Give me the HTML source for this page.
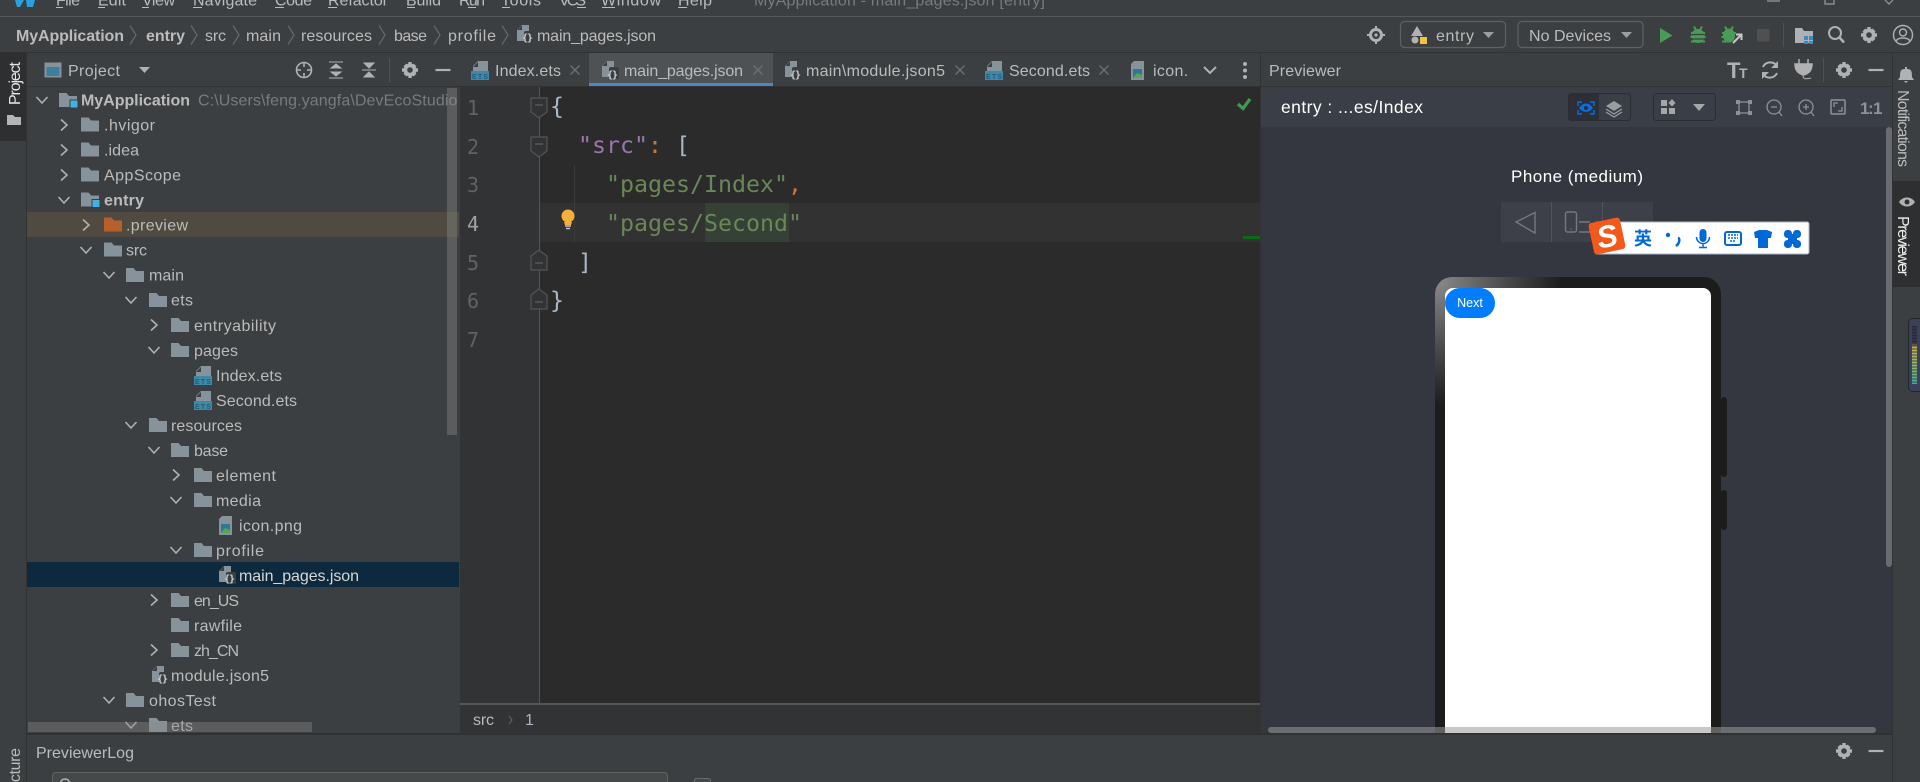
<!DOCTYPE html>
<html lang="en"><head><meta charset="utf-8"><title>DevEco Studio</title>
<style>
html,body{margin:0;padding:0;background:#3c3f41;width:1920px;height:782px;overflow:hidden}
svg{display:block}
text{font-family:"Liberation Sans",sans-serif;font-size:16px;fill:#bbbbbb;white-space:pre}
.b{font-weight:bold}
.m text,text.m{font-family:"DejaVu Sans Mono",monospace;font-size:23.25px}
.n{font-family:"DejaVu Sans Mono",monospace;font-size:20px;fill:#606366}
.w{font-family:"Liberation Sans",sans-serif;fill:#fff;font-size:17.5px}
.e{font-size:7px;font-weight:bold;fill:#1f5f7c}
.j{font-family:"DejaVu Sans Mono",monospace;font-size:10px;font-weight:bold;fill:#d0d4d6}
.ic{fill:none;stroke:#afb1b3;stroke-width:1.6}
</style></head><body>
<svg xmlns="http://www.w3.org/2000/svg" width="1920" height="782" viewBox="0 0 1920 782">
<defs>
<g id="f"><path d="M0 0H7.5L10 3H18V14H0Z" fill="#87939a"/></g>
<g id="fo"><path d="M0 0H7.5L10 3H18V14H0Z" fill="#b85f2e"/></g>
<g id="fm"><path d="M0 0H7.5L10 3H18V14H0Z" fill="#87939a"/><rect x="11" y="7" width="8" height="8" fill="#3fb1e3" stroke="#3c3f41" stroke-width="1"/></g>
<path id="r" d="M-3-5.500 3 0-3 5.500" fill="none" stroke="#afb1b3" stroke-width="1.600"/>
<path id="d" d="M-5.500-3 0 3 5.500-3" fill="none" stroke="#afb1b3" stroke-width="1.600"/>
<g id="ets"><path d="M7 0H17V10H2V5Z" fill="#87939a"/><path d="M7 1V6H2Z" fill="#3c3f41"/><rect x="0" y="10" width="18" height="9" fill="#3f88a8"/></g>
<g id="js"><path d="M5 0H12V7H14V16H0V5Z" fill="#87939a"/><path d="M5 .5V5H.5Z" fill="#3c3f41"/><rect x="7" y="6" width="10" height="12" rx="2" fill="#3c3f41"/></g>
<g id="im"><path d="M3 0H13V19H0V3Z" fill="#87939a"/><rect x="2" y="8" width="9" height="9" fill="#2e7a93"/><path d="M2 17 6 12 11 14V17Z" fill="#5aa455"/></g>
<g id="gear"><circle r="4.600" fill="none" stroke="#afb1b3" stroke-width="3.600"/><path d="M-1.700-8H1.700V-5H-1.700ZM-1.700 5H1.700V8H-1.700ZM5 -1.700H8V1.700H5ZM-8-1.700H-5V1.700H-8ZM3.600-6.500 6.500-3.600 4.500-1.600 1.600-4.500ZM-6.500 3.600-3.600 6.500-1.600 4.500-4.500 1.600ZM-6.500-3.600-3.600-6.500-1.600-4.500-4.500-1.600ZM3.600 6.500 6.500 3.600 4.500 1.600 1.600 4.500Z" fill="#afb1b3"/></g>
<path id="mn" d="M-7.500 0H7.500" stroke="#afb1b3" stroke-width="2.200"/>
<path id="x" d="M-4.500-4.500 4.500 4.500M4.500-4.500-4.500 4.500" stroke="#6e7072" stroke-width="1.300"/>
<path id="cv" d="M-3-9.500 3 0-3 9.500" fill="none" stroke="#67696b" stroke-width="1.200"/>
<g id="fold"><path d="M0 0H16V14L8 20 0 14Z" fill="#313335" stroke="#555" stroke-width="1.200"/><path d="M4 7H12" stroke="#606366" stroke-width="1.200"/></g>
<g id="fold2"><path d="M0 20H16V6L8 0 0 6Z" fill="#313335" stroke="#555" stroke-width="1.200"/><path d="M4 13H12" stroke="#606366" stroke-width="1.200"/></g>
<radialGradient id="ph" gradientUnits="userSpaceOnUse" cx="1437" cy="280" r="125"><stop offset="0" stop-color="#8a8a8a"/><stop offset=".55" stop-color="#4a4a4a"/><stop offset="1" stop-color="#1c1c1c"/></radialGradient>
<linearGradient id="mt" x1="0" y1="0" x2="0" y2="1"><stop offset="0" stop-color="#272936"/><stop offset=".3" stop-color="#272936"/><stop offset=".36" stop-color="#c7b13f"/><stop offset=".65" stop-color="#9aba5a"/><stop offset="1" stop-color="#37b495"/></linearGradient>
<clipPath id="trc"><rect x="27" y="87" width="430" height="646"/></clipPath>
<clipPath id="tc"><rect x="0" y="0" width="1920" height="16"/></clipPath>
<clipPath id="pc"><rect x="1262" y="127" width="630" height="606"/></clipPath>
<clipPath id="ic"><rect x="1140" y="53" width="49" height="33"/></clipPath>
</defs>

<rect width="1920" height="782" fill="#3c3f41"/>

<!-- menu bar -->
<g clip-path="url(#tc)">
<path d="M15 0H24L20 7H17ZM26 0H35L33 7H27Z" fill="#2b9fe0"/>
<text x="56" y="5.500" textLength="24">File</text><text x="98" y="5.500" textLength="28">Edit</text><text x="142" y="5.500" textLength="33">View</text><text x="193" y="5.500" textLength="64">Navigate</text><text x="275" y="5.500" textLength="37">Code</text><text x="328" y="5.500" textLength="60">Refactor</text><text x="406" y="5.500" textLength="35">Build</text><text x="459" y="5.500" textLength="26">Run</text><text x="501" y="5.500" textLength="40">Tools</text><text x="559" y="5.500" textLength="27">VCS</text><text x="601" y="5.500" textLength="60">Window</text><text x="678" y="5.500" textLength="34">Help</text>
<path d="M56 7.500H63M98 7.500H105M142 7.500H149M193 7.500H202M275 7.500H284M328 7.500H337M407 7.500H415M468 7.500H476M502 7.500H510M577 7.500H586M602 7.500H615M678 7.500H687" stroke="#bbbbbb" stroke-width="1"/>
<text x="754" y="5.500" textLength="291" style="fill:#7a7a7a">MyApplication - main_pages.json [entry]</text>
<path d="M1767 1H1780M1825 0V4H1834V0M1885 0 1889 4 1893 0" fill="none" stroke="#9a9a9a" stroke-width="1.200"/>
</g>
<rect y="16" width="1920" height="1" fill="#555759"/>

<!-- breadcrumbs -->
<text class="b" x="16" y="41" textLength="108">MyApplication</text><use href="#cv" x="133" y="35"/>
<text class="b" x="146" y="41" textLength="39">entry</text><use href="#cv" x="194" y="35"/>
<text x="205" y="41" textLength="21">src</text><use href="#cv" x="236" y="35"/>
<text x="246" y="41" textLength="35">main</text><use href="#cv" x="291" y="35"/>
<text x="301" y="41" textLength="71">resources</text><use href="#cv" x="382" y="35"/>
<text x="394" y="41" textLength="33">base</text><use href="#cv" x="437" y="35"/>
<text x="448" y="41" textLength="48">profile</text><use href="#cv" x="505" y="35"/>
<use href="#js" x="517" y="25"/><text class="j" x="522" y="41" textLength="11">{}</text>
<text x="537" y="41" textLength="119">main_pages.json</text>

<!-- top-right toolbar -->
<circle cx="1376" cy="35" r="5.500" fill="none" stroke="#afb1b3" stroke-width="3"/><circle cx="1376" cy="35" r="1.600" fill="#afb1b3"/><path d="M1376 26V29M1376 41V44M1367 35H1370M1382 35H1385" stroke="#afb1b3" stroke-width="2"/>
<rect x="1400.500" y="21.500" width="105" height="26" rx="4" fill="none" stroke="#5e6163" stroke-width="1.200"/>
<path d="M1417 26 1423 36H1411Z" fill="#afb1b3"/><circle cx="1415" cy="40" r="3.500" fill="#afb1b3"/><rect x="1420" y="37" width="7" height="7" fill="#f3c33d"/>
<text x="1436" y="41" textLength="38">entry</text><path d="M1483 32H1494L1488.500 38Z" fill="#9b9ea0"/>
<rect x="1518" y="21.500" width="125" height="26" rx="4" fill="none" stroke="#5e6163" stroke-width="1.200"/>
<text x="1529" y="41" textLength="82">No Devices</text><path d="M1621 32H1632L1626.500 38Z" fill="#9b9ea0"/>
<path d="M1660 28 1672.500 35.500 1660 43Z" fill="#499c54"/>
<g fill="#499c54"><ellipse cx="1698" cy="36" rx="6.500" ry="7"/><path d="M1691 32H1705V34H1691ZM1690.500 36H1705.500V38H1690.500ZM1691 40.500H1705V42.500H1691Z"/></g><path d="M1694 26.500 1696 30M1702 26.500 1700 30" stroke="#499c54" stroke-width="2"/><path d="M1692 34.500H1704M1692 39H1704" stroke="#3c3f41" stroke-width="1.200"/>
<g fill="#499c54"><ellipse cx="1729" cy="35.500" rx="6" ry="7"/><path d="M1722 32H1736V34H1722ZM1721.500 36H1733V38H1721.500ZM1722 40.500H1731V42.500H1722Z"/></g><path d="M1725 26.500 1727 30M1733 26.500 1731 30" stroke="#499c54" stroke-width="2"/><path d="M1733 43 1741 35M1736 34.500H1741.500V40" fill="none" stroke="#c6c8ca" stroke-width="2"/>
<rect x="1757" y="29" width="12.500" height="12.500" fill="#505050"/>
<rect x="1783" y="23" width="1" height="24" fill="#4f5254"/>
<path d="M1795 28H1802L1804 31H1813V43H1795Z" fill="#afb1b3"/><path d="M1804 36H1808V40H1804ZM1809 36H1813V40H1809ZM1804 41H1808V44H1804ZM1809 41H1813V44H1809Z" fill="#2f8fd0"/>
<circle cx="1835" cy="33" r="6" fill="none" stroke="#afb1b3" stroke-width="2"/><path d="M1839.500 37.500 1844 42.500" stroke="#afb1b3" stroke-width="2.500"/>
<use href="#gear" x="1869" y="35"/>
<circle cx="1903" cy="35" r="9.500" fill="none" stroke="#afb1b3" stroke-width="1.400"/><circle cx="1903" cy="32.500" r="3.500" fill="none" stroke="#afb1b3" stroke-width="1.400"/><path d="M1896 41C1898 37 1908 37 1910 41" fill="none" stroke="#afb1b3" stroke-width="1.400"/>
<rect y="52" width="1920" height="1" fill="#2f3133"/>

<!-- left strip -->
<rect x="0" y="53" width="26" height="88" fill="#2d2f30"/>
<rect x="26" y="53" width="1" height="729" fill="#323232"/>
<text transform="translate(20,105) rotate(-90)" textLength="43" style="fill:#e6e6e6">Project</text>
<path d="M7 115H13L15 117H21V125H7Z" fill="#b5b5b5"/>
<text transform="translate(20,810) rotate(-90)" textLength="62">Structure</text>

<!-- project pane header -->
<rect x="44.500" y="62.500" width="17" height="15" fill="#87939a"/><rect x="46.500" y="67" width="13" height="9" fill="#3d7f9d"/>
<text x="68" y="76" textLength="52">Project</text>
<path d="M139 67H150L144.500 73Z" fill="#afb1b3"/>
<circle cx="304" cy="70" r="7.500" class="ic"/><path d="M304 62V67M304 73V78M296 70H301M307 70H312" stroke="#afb1b3" stroke-width="1.600"/>
<path d="M329 62H343M329 78H343M331 68 336 64 341 68ZM331 72 336 76 341 72Z" fill="#afb1b3" stroke="#afb1b3" stroke-width="1"/>
<path d="M362 70H376M364 63 369 68 374 63ZM364 77 369 72 374 77Z" fill="#afb1b3" stroke="#afb1b3" stroke-width="1"/>
<rect x="389" y="58" width="1" height="24" fill="#4f5254"/>
<use href="#gear" x="410" y="70"/><use href="#mn" x="443" y="70"/>
<rect x="27" y="86" width="433" height="1" fill="#323232"/>

<!-- tree -->
<rect x="27" y="212" width="432" height="25" fill="#4f4b41"/>
<rect x="27" y="562" width="432" height="25" fill="#0d293e"/>
<g clip-path="url(#trc)">
<use href="#d" x="42" y="100"/><use href="#fm" x="59" y="93"/><text class="b" x="81" y="105.500" textLength="109">MyApplication</text>
<text x="198" y="105.500" textLength="318" style="fill:#787b7d">C:\Users\feng.yangfa\DevEcoStudioProjects</text>
<use href="#r" x="64" y="125"/><use href="#f" x="81" y="117.500"/><text x="104" y="130.500" textLength="51">.hvigor</text>
<use href="#r" x="64" y="150"/><use href="#f" x="81" y="142.500"/><text x="104" y="155.500" textLength="35">.idea</text>
<use href="#r" x="64" y="175"/><use href="#f" x="81" y="167.500"/><text x="104" y="180.500" textLength="77">AppScope</text>
<use href="#d" x="64" y="200"/><use href="#fm" x="81" y="192.500"/><text class="b" x="104" y="205.500" textLength="40">entry</text>
<use href="#r" x="86" y="225"/><use href="#fo" x="104" y="217.500"/><text x="126" y="230.500" textLength="62">.preview</text>
<use href="#d" x="86" y="250"/><use href="#f" x="104" y="242.500"/><text x="126" y="255.700" textLength="21">src</text>
<use href="#d" x="109" y="275"/><use href="#f" x="126" y="268"/><text x="149" y="280.700" textLength="35">main</text>
<use href="#d" x="131" y="300"/><use href="#f" x="149" y="293"/><text x="171" y="305.700" textLength="22">ets</text>
<use href="#r" x="154" y="325"/><use href="#f" x="171" y="318"/><text x="194" y="330.800" textLength="82">entryability</text>
<use href="#d" x="154" y="350"/><use href="#f" x="171" y="343"/><text x="194" y="355.800" textLength="44">pages</text>
<use href="#ets" x="194" y="366"/><text class="e" x="195" y="384" textLength="16">ETS</text><text x="216" y="380.800" textLength="66">Index.ets</text>
<use href="#ets" x="194" y="391"/><text class="e" x="195" y="409" textLength="16">ETS</text><text x="216" y="405.800" textLength="81">Second.ets</text>
<use href="#d" x="131" y="425"/><use href="#f" x="149" y="418"/><text x="171" y="430.900" textLength="71">resources</text>
<use href="#d" x="154" y="450"/><use href="#f" x="171" y="443"/><text x="194" y="455.900" textLength="34">base</text>
<use href="#r" x="176" y="475"/><use href="#f" x="194" y="468"/><text x="216" y="480.900" textLength="60">element</text>
<use href="#d" x="176" y="500"/><use href="#f" x="194" y="493"/><text x="216" y="506" textLength="45">media</text>
<use href="#im" x="219" y="516"/><text x="239" y="531" textLength="63">icon.png</text>
<use href="#d" x="176" y="550"/><use href="#f" x="194" y="543"/><text x="216" y="556" textLength="48">profile</text>
<use href="#js" x="219" y="566"/><text class="j" x="224" y="582" textLength="11">{}</text><text x="239" y="581" textLength="120" style="fill:#d6d6d6">main_pages.json</text>
<use href="#r" x="154" y="600"/><use href="#f" x="171" y="593"/><text x="194" y="606" textLength="45">en_US</text>
<use href="#f" x="171" y="618"/><text x="194" y="631" textLength="48">rawfile</text>
<use href="#r" x="154" y="650"/><use href="#f" x="171" y="643"/><text x="194" y="656" textLength="45">zh_CN</text>
<use href="#js" x="152" y="666"/><text class="j" x="157" y="682" textLength="11">{}</text><text x="171" y="681" textLength="98">module.json5</text>
<use href="#d" x="109" y="700"/><use href="#f" x="126" y="693"/><text x="149" y="706" textLength="67">ohosTest</text>
<use href="#d" x="131" y="725"/><use href="#f" x="149" y="718"/><text x="171" y="731" textLength="22">ets</text>
</g>
<rect x="447" y="88" width="10" height="347" fill="#8a8a8a" opacity=".4"/>
<rect x="28" y="722" width="284" height="10" fill="#8a8a8a" opacity=".4"/>

<!-- tab bar -->
<rect x="589" y="53" width="184" height="30" fill="#4e5254"/>
<rect x="589" y="83" width="184" height="4" fill="#4a88c7"/>
<use href="#ets" x="471" y="61"/><text class="e" x="472" y="79" textLength="16">ETS</text>
<text x="495" y="76" textLength="66">Index.ets</text><use href="#x" x="575" y="70"/>
<use href="#js" x="602" y="61"/><text class="j" x="607" y="78" textLength="11">{}</text>
<text x="624" y="76" textLength="119">main_pages.json</text><use href="#x" x="758" y="70"/>
<use href="#js" x="785" y="61"/><text class="j" x="790" y="78" textLength="11">{}</text>
<text x="806" y="76" textLength="139">main\module.json5</text><use href="#x" x="960" y="70"/>
<use href="#ets" x="985" y="61"/><text class="e" x="986" y="79" textLength="16">ETS</text>
<text x="1009" y="76" textLength="81">Second.ets</text><use href="#x" x="1104" y="70"/>
<use href="#im" x="1131" y="61"/>
<g clip-path="url(#ic)"><text x="1153" y="76" textLength="63">icon.png</text></g>
<path d="M1204 67 1210 73 1216 67" fill="none" stroke="#afb1b3" stroke-width="2"/>
<circle cx="1245" cy="64" r="2" fill="#afb1b3"/><circle cx="1245" cy="70.500" r="2" fill="#afb1b3"/><circle cx="1245" cy="77" r="2" fill="#afb1b3"/>
<rect x="460" y="86" width="800" height="1" fill="#323232"/>

<!-- editor -->
<rect x="460" y="87" width="800" height="616" fill="#2b2b2b"/>
<rect x="460" y="87" width="80" height="616" fill="#313335"/>
<rect x="540" y="203" width="720" height="39" fill="#323232"/>
<rect x="705" y="203" width="84" height="39" fill="#344134"/>
<rect x="539" y="87" width="1" height="616" fill="#555555"/>
<rect x="574" y="165" width="1" height="77" fill="#3b3b3b"/>
<use href="#fold" x="531" y="98"/><use href="#fold" x="531" y="137"/><use href="#fold2" x="531" y="250"/><use href="#fold2" x="531" y="289"/>
<text class="n" x="467" y="115">1</text><text class="n" x="467" y="154">2</text><text class="n" x="467" y="192">3</text><text class="n" x="467" y="231" style="fill:#a4a3a3">4</text><text class="n" x="467" y="270">5</text><text class="n" x="467" y="308">6</text><text class="n" x="467" y="347">7</text>
<g class="m">
<text x="550" y="114" style="fill:#a9b7c6">{</text>
<text x="578" y="153" style="fill:#9876aa">"src"<tspan style="fill:#cc7832">:</tspan><tspan style="fill:#a9b7c6"> [</tspan></text>
<text x="606" y="192" style="fill:#6a8759">"pages/Index"<tspan style="fill:#cc7832">,</tspan></text>
<text x="606" y="231" style="fill:#6a8759">"pages/Second"</text>
<text x="578" y="270" style="fill:#a9b7c6">]</text>
<text x="550" y="308" style="fill:#a9b7c6">}</text>
</g>
<circle cx="568" cy="216" r="6.500" fill="#f4af3d"/><path d="M564 222H572L571 225H565Z" fill="#f4af3d"/><path d="M565 226H571M566 228.500H570" stroke="#c4c4c4" stroke-width="1.500"/>
<path d="M1238 104 1243 108.500 1250 99" fill="none" stroke="#3f9c4e" stroke-width="3.200"/>
<rect x="1243" y="236" width="17" height="3" fill="#0b6b13"/>
<rect x="460" y="703" width="800" height="2" fill="#555555"/>
<rect x="460" y="705" width="800" height="28" fill="#313335"/>
<text x="473" y="725" textLength="21" font-size="14">src</text>
<path d="M509 716 512 720 509 724" fill="none" stroke="#5c5e60" stroke-width="1.200"/>
<text x="525" y="725" style="fill:#a9b7c6">1</text>

<!-- previewer -->
<rect x="1260" y="53" width="1" height="681" fill="#323232"/>
<text x="1269" y="76" textLength="72">Previewer</text>
<text x="1727" y="78" style="font-size:22px;fill:#afb1b3;font-weight:bold" textLength="13">T</text><text x="1739" y="78" style="font-size:14px;fill:#afb1b3;font-weight:bold" textLength="9">T</text>
<path d="M1763 67A8 8 0 0 1 1777 66M1777 73A8 8 0 0 1 1763 74" fill="none" stroke="#afb1b3" stroke-width="2"/><path d="M1778 61V68H1771ZM1762 79V72H1769Z" fill="#afb1b3"/>
<path d="M1795 64H1812C1812 72 1807 74 1803.500 75 1800 74 1795 72 1795 64ZM1799 59V64M1808 59V64" fill="#afb1b3" stroke="#afb1b3" stroke-width="1.500"/><path d="M1803 75C1803 80 1806 79 1811 78" fill="none" stroke="#afb1b3" stroke-width="1"/>
<rect x="1823" y="58" width="1" height="24" fill="#4f5254"/>
<use href="#gear" x="1844" y="70"/><use href="#mn" x="1876" y="70"/>
<rect x="1261" y="86" width="631" height="1" fill="#323232"/>
<rect x="1261" y="87" width="631" height="40" fill="#3a3e47"/>
<rect x="1261" y="127" width="631" height="606" fill="#343740"/>
<text class="w" x="1281" y="113" textLength="142">entry : ...es/Index</text>
<rect x="1568.500" y="93.500" width="62" height="27" rx="3" fill="#3a3e47" stroke="#2b2d33"/>
<rect x="1569" y="94" width="30" height="26" rx="2" fill="#2c2f36"/>
<path d="M1578 106V102H1582M1590 102H1594V106M1594 110V114H1590M1582 114H1578V110" fill="none" stroke="#0a6ee0" stroke-width="1.400"/><path d="M1579 108C1583 102 1589 102 1593 108 1589 113 1583 113 1579 108Z" fill="#0a6ee0"/><circle cx="1586" cy="108" r="2" fill="#2c2f36"/>
<path d="M1614 101 1622 106 1614 111 1606 106Z" fill="#9a9da0"/><path d="M1606 109 1614 114 1622 109M1606 112 1614 117 1622 112" fill="none" stroke="#9a9da0" stroke-width="1.200"/>
<rect x="1653.500" y="93.500" width="62" height="27" rx="3" fill="#3a3e47" stroke="#2b2d33"/>
<path d="M1661 100H1667V106H1661ZM1661 108H1667V114H1661ZM1669 108H1675V114H1669Z" fill="#a4a6a8"/><path d="M1672 99 1675.500 103 1672 106.500 1668.500 103Z" fill="#a4a6a8"/>
<path d="M1693 104H1705L1699 111Z" fill="#a4a6a8"/>
<rect x="1739" y="102" width="10" height="11" fill="none" stroke="#8f9295" stroke-width="1.300"/><path d="M1736 100H1740V104H1736ZM1748 100H1752V104H1748ZM1736 111H1740V115H1736ZM1748 111H1752V115H1748Z" fill="#8f9295"/>
<circle cx="1774" cy="107" r="7" fill="none" stroke="#8f9295" stroke-width="1.300"/><path d="M1771 107H1777M1779 112 1782 116" stroke="#8f9295" stroke-width="1.300"/>
<circle cx="1806" cy="107" r="7" fill="none" stroke="#8f9295" stroke-width="1.300"/><path d="M1803 107H1809M1806 104V110M1811 112 1814 116" stroke="#8f9295" stroke-width="1.300"/>
<rect x="1831" y="100" width="14" height="14" rx="1" fill="none" stroke="#8f9295" stroke-width="1.500"/><path d="M1834 107V103H1838M1842 107V111H1838" fill="none" stroke="#8f9295" stroke-width="1.300"/>
<text x="1860" y="114" style="font-size:17px;font-weight:bold;fill:#8f9295">1</text><text x="1868" y="114" style="font-size:17px;font-weight:bold;fill:#8f9295">:</text><text x="1873" y="114" style="font-size:17px;font-weight:bold;fill:#8f9295">1</text>

<g clip-path="url(#pc)">
<text class="w" x="1511" y="182" textLength="132" style="font-size:17px">Phone (medium)</text>
<rect x="1501" y="202" width="152" height="40" fill="#3d4049"/>
<rect x="1551" y="202" width="1" height="40" fill="#50535b"/><rect x="1602" y="202" width="1" height="40" fill="#50535b"/>
<path d="M1516 222 1535 212.500V233Z" fill="none" stroke="#75787d" stroke-width="1.400"/>
<rect x="1565.500" y="212" width="11" height="20" rx="2" fill="none" stroke="#75787d" stroke-width="1.400"/><circle cx="1571" cy="229" r=".8" fill="#75787d"/>
<path d="M1579 222H1590M1579 232H1590" stroke="#75787d" stroke-width="1.400"/>
<rect x="1721" y="397" width="6" height="80" rx="3" fill="#1c1c1c"/>
<rect x="1721" y="490" width="6" height="40" rx="3" fill="#1c1c1c"/>
<rect x="1435" y="277" width="286" height="480" rx="17" fill="url(#ph)"/>
<path d="M1445 296a8 8 0 0 1 8-8H1703a8 8 0 0 1 8 8V760H1445Z" fill="#fff"/>
<rect x="1445" y="288" width="50" height="30" rx="15" fill="#007dff"/>
<text x="1470" y="307" text-anchor="middle" style="font-size:12.500px;fill:#fff">Next</text>
</g>
<rect x="1886" y="127" width="6" height="440" rx="3" fill="#686c72"/>
<rect x="1268" y="727" width="608" height="6" rx="3" fill="#9a9a9a" opacity=".55"/>

<!-- IME bar -->
<rect x="1595" y="222" width="214" height="32" rx="2" fill="#fff" stroke="#a9b7cc"/>
<rect x="1591" y="220" width="32" height="32" rx="3" fill="#f4591c" transform="rotate(-12 1607 236)"/>
<text x="1607" y="247" text-anchor="middle" transform="rotate(-12 1607 236)" style="font-size:31px;font-weight:bold;font-style:italic;fill:#fff">S</text>
<text x="1634" y="245" style='font-family:"Liberation Sans","Noto Sans CJK SC",sans-serif;font-size:18px;font-weight:bold;fill:#0069d6'>英</text>
<circle cx="1668" cy="235" r="2.200" fill="#0069d6"/><path d="M1678 238C1680 238 1680 243 1676 246" fill="none" stroke="#0069d6" stroke-width="2.500"/>
<rect x="1699.500" y="229" width="7" height="13" rx="3.500" fill="#0069d6"/><path d="M1696.500 237A6.500 6.500 0 0 0 1709.500 237M1703 244V247M1699 247.500H1707" fill="none" stroke="#0069d6" stroke-width="1.500"/>
<rect x="1725" y="232" width="16" height="13" rx="2" fill="none" stroke="#0069d6" stroke-width="2"/><path d="M1728 235H1738M1728 238H1738M1730 241H1736" stroke="#0069d6" stroke-width="1.500" stroke-dasharray="2 1"/>
<path d="M1754 232 1759 230H1767L1772 232 1771 238H1768V248H1758V238H1755Z" fill="#0069d6"/>
<g fill="#0069d6"><rect x="1784" y="230" width="8" height="8" rx="3.500"/><rect x="1793" y="230" width="8" height="8" rx="3.500"/><rect x="1784" y="240" width="8" height="8" rx="3.500"/><rect x="1793" y="240" width="8" height="8" rx="3.500"/><rect x="1788" y="234" width="9" height="10"/></g>

<!-- right strip -->
<rect x="1892" y="53" width="1" height="729" fill="#323232"/>
<rect x="1893" y="181" width="27" height="106" fill="#2d2f30"/>
<path d="M1900 77C1900 70 1901 69 1906 69 1911 69 1912 70 1912 77L1914 80H1898ZM1904 81H1908L1906 83Z" fill="#afb1b3"/><rect x="1905" y="67" width="2" height="2" fill="#afb1b3"/>
<text transform="translate(1898,90) rotate(90)" textLength="77">Notifications</text>
<path d="M1899 202C1903 196 1911 196 1915 202 1911 208 1903 208 1899 202Z" fill="#afb1b3"/><circle cx="1907" cy="202" r="2.500" fill="#2d2f30"/>
<text transform="translate(1898,216) rotate(90)" textLength="60" style="fill:#eeeeee">Previewer</text>
<rect x="1908.500" y="318.500" width="14" height="73" rx="4" fill="#3d4158" stroke="#24262f"/>
<rect x="1912" y="326" width="5" height="58" fill="url(#mt)"/>
<path d="M1912 328H1917M1912 331H1917M1912 334H1917M1912 337H1917M1912 340H1917M1912 343H1917M1912 346H1917M1912 349H1917M1912 352H1917M1912 355H1917M1912 358H1917M1912 361H1917M1912 364H1917M1912 367H1917M1912 370H1917M1912 373H1917M1912 376H1917M1912 379H1917M1912 382H1917" stroke="#3d4158" stroke-width="1"/>

<!-- bottom panel -->
<rect x="27" y="733" width="1865" height="2" fill="#2f3133"/>
<rect x="27" y="735" width="1865" height="47" fill="#3c3f41"/>
<text x="36" y="758" textLength="98">PreviewerLog</text>
<use href="#gear" x="1844" y="751"/><use href="#mn" x="1876" y="751"/>
<rect x="52.500" y="772.500" width="615" height="20" rx="3" fill="#45494a" stroke="#646464"/>
<circle cx="65" cy="784" r="5" fill="none" stroke="#afb1b3" stroke-width="1.400"/>
<rect x="694.500" y="778.500" width="16" height="16" rx="2" fill="#43494a" stroke="#6b6b6b"/>
</svg>
</body></html>
